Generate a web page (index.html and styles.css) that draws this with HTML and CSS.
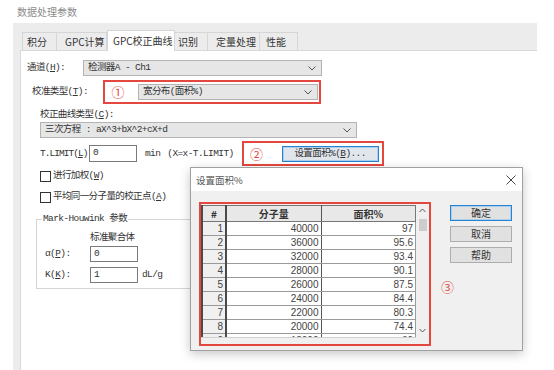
FILE: index.html
```html
<!DOCTYPE html>
<html lang="zh-CN">
<head>
    <meta charset="UTF-8">
    <meta name="viewport" content="width=device-width, initial-scale=1.0">
    <title>数据处理参数</title>
    <link rel="stylesheet" href="styles.css">
</head>
<body>
    <div class="caption">数据处理参数</div>

    <div class="window">
        <div class="tabs">
            <span class="tab tab-1">积分</span>
            <span class="tab tab-2">GPC计算</span>
            <span class="tab active">GPC校正曲线</span>
            <span class="tab tab-4">识别</span>
            <span class="tab tab-5">定量处理</span>
            <span class="tab tab-6">性能</span>
        </div>

        <div class="panel">
            <div class="row row-channel">
                <span class="lbl lbl-channel">通道(<u>H</u>):</span>
                <div class="select select-channel">
                    <span>检测器A - Ch1</span>
                    <svg class="chev" width="8" height="5" viewBox="0 0 8 5"><polyline points="0.5,0.5 4,4 7.5,0.5"/></svg>
                </div>
            </div>

            <div class="row row-type">
                <span class="lbl lbl-type">校准类型(<u>T</u>):</span>
                <div class="mark mark-1">
                    <span class="circ">①</span>
                    <div class="select select-type">
                        <span>宽分布(面积%)</span>
                        <svg class="chev" width="8" height="5" viewBox="0 0 8 5"><polyline points="0.5,0.5 4,4 7.5,0.5"/></svg>
                    </div>
                </div>
            </div>

            <div class="lbl lbl-curve">校正曲线类型(<u>C</u>):</div>
            <div class="select select-curve">
                <span>三次方程 : aX^3+bX^2+cX+d</span>
                <svg class="chev" width="8" height="5" viewBox="0 0 8 5"><polyline points="0.5,0.5 4,4 7.5,0.5"/></svg>
            </div>

            <div class="row row-limit">
                <span class="lbl lbl-limit">T.LIMIT(<u>L</u>)</span>
                <div class="input input-limit">0</div>
                <span class="lbl unit-min">min</span>
                <span class="lbl formula">(X=x-T.LIMIT)</span>
                <div class="mark mark-2">
                    <span class="circ">②</span>
                    <div class="button button-area">设置面积%(<u>B</u>)...</div>
                </div>
            </div>

            <div class="check check-weight"><span class="box"></span>进行加权(<u>W</u>)</div>
            <div class="check check-avg"><span class="box"></span>平均同一分子量的校正点(<u>A</u>)</div>

            <fieldset class="group">
                <legend>Mark-Houwink 参数</legend>
                <div class="lbl std">标准聚合体</div>
                <div class="row row-alpha">
                    <span class="lbl lbl-param">α(<u>P</u>):</span>
                    <div class="input">0</div>
                </div>
                <div class="row row-k">
                    <span class="lbl lbl-param">K(<u>K</u>):</span>
                    <div class="input">1</div>
                    <span class="lbl unit-dl">dL/g</span>
                </div>
            </fieldset>
        </div>
    </div>

    <div class="dialog">
        <div class="dialog-title">
            <span>设置面积%</span>
            <svg class="close" width="10" height="10" viewBox="0 0 10 10"><path d="M0.5 0.5 L9.5 9.5 M9.5 0.5 L0.5 9.5"/></svg>
        </div>
        <div class="dialog-body">
            <div class="mark mark-3">
                <div class="grid">
                    <table>
                        <tr><th class="c-no">#</th><th class="c-mw">分子量</th><th class="c-area">面积%</th></tr>
                        <tr><td class="c-no">1</td><td>40000</td><td>97</td></tr>
                        <tr><td class="c-no">2</td><td>36000</td><td>95.6</td></tr>
                        <tr><td class="c-no">3</td><td>32000</td><td>93.4</td></tr>
                        <tr><td class="c-no">4</td><td>28000</td><td>90.1</td></tr>
                        <tr><td class="c-no">5</td><td>26000</td><td>87.5</td></tr>
                        <tr><td class="c-no">6</td><td>24000</td><td>84.4</td></tr>
                        <tr><td class="c-no">7</td><td>22000</td><td>80.3</td></tr>
                        <tr><td class="c-no">8</td><td>20000</td><td>74.4</td></tr>
                        <tr><td class="c-no">9</td><td>18000</td><td>69</td></tr>
                    </table>
                </div>
                <div class="scrollbar">
                    <svg width="7" height="5" viewBox="0 0 7 5"><polyline points="0.5,4 3.5,1 6.5,4"/></svg>
                    <div class="thumb"></div>
                    <svg class="down" width="7" height="5" viewBox="0 0 7 5"><polyline points="0.5,1 3.5,4 6.5,1"/></svg>
                </div>
            </div>
            <div class="side">
                <div class="button default">确定</div>
                <div class="button">取消</div>
                <div class="button">帮助</div>
                <span class="circ circ-3">③</span>
            </div>
        </div>
    </div>
</body>
</html>
```

FILE: styles.css
```css
* {
    box-sizing: border-box;
}
body {
    margin: 0;
    background: #fff;
    color: #333;
    font-family: "Noto Sans CJK SC", sans-serif;
    font-size: 10px;
    line-height: 14px;
    width: 554px;
    height: 370px;
    overflow: hidden;
    position: relative;
}
u {
    text-decoration: underline;
    text-underline-offset: 1px;
}
.caption {
    color: #8c8c8c;
    padding: 5px 0 0 17px;
    margin-bottom: 4px;
}
.window {
    margin-left: 13px;
    width: 524px;
    height: 347px;
    background: #ececec;
    display: flex;
    flex-direction: column;
}
.tabs {
    height: 27px;
    padding-left: 9px;
    display: flex;
    align-items: flex-end;
}
.tab {
    height: 18px;
    line-height: 17px;
    border: 1px solid #d6d6d6;
    border-bottom: none;
    border-left: none;
    padding-left: 4px;
    color: #333;
}
.tab-1 { width: 35px; border-left: 1px solid #d6d6d6; }
.tab-2 { width: 50px; padding-left: 8px; }
.tab.active {
    width: 68px;
    height: 21px;
    line-height: 19px;
    background: #fff;
    border-left: 1px solid #d6d6d6;
    margin-bottom: -1px;
    position: relative;
    padding-left: 5px;
}
.tab-4 { width: 33px; padding-left: 3px; }
.tab-5 { width: 52px; padding-left: 8px; }
.tab-6 { width: 38px; padding-left: 6px; }

.panel {
    flex: 1;
    margin-left: 7px;
    background: #fff;
    border-top: 1px solid #d9d9d9;
    border-left: 1px solid #dadada;
}
.row {
    display: flex;
    align-items: center;
}
.lbl, .select, .input, .button, .check, legend {
    font-family: "Liberation Mono", "Noto Sans CJK SC", monospace;
    font-size: 9.5px;
    letter-spacing: -0.6px;
    white-space: nowrap;
}
.select {
    height: 16px;
    background: #e6e6e6;
    border: 1px solid #b4b4b4;
    display: flex;
    align-items: center;
    justify-content: space-between;
    padding: 0 5px 0 4px;
}
.chev polyline, .scrollbar polyline {
    fill: none;
    stroke: #555;
    stroke-width: 1;
}
.row-channel {
    margin-top: 9px;
    padding-left: 6px;
}
.lbl-channel { width: 56px; }
.select-channel { width: 239px; }

.row-type {
    margin-top: 4px;
    padding-left: 11px;
}
.lbl-type { width: 71px; }
.mark {
    border: 2px solid #e4473e;
    display: flex;
    align-items: center;
}
.circ {
    color: #e4473e;
    font-family: "Noto Sans CJK SC", sans-serif;
    font-size: 13px;
    line-height: 14px;
    text-align: center;
}
.mark-1 {
    width: 218px;
    height: 24px;
}
.mark-1 .circ { width: 26px; }
.select-type {
    width: 180px;
    margin-left: 7px;
}

.lbl-curve {
    margin: 4px 0 0 19px;
}
.select-curve {
    width: 317px;
    margin-left: 19px;
}

.row-limit {
    margin-top: 3px;
    padding-left: 19px;
    height: 25px;
}
.lbl-limit {
    width: 49px;
    letter-spacing: -0.95px;
}
.input {
    width: 48px;
    height: 17px;
    border: 1px solid #7a7a7a;
    background: #fff;
    padding: 0 3px;
    line-height: 13px;
}
.unit-min { margin-left: 8px; }
.formula { margin-left: 7px; }
.mark-2 {
    margin-left: 8px;
    width: 142px;
    height: 25px;
}
.mark-2 .circ { width: 26px; }
.button {
    height: 16px;
    background: #e1e1e1;
    border: 1px solid #adadad;
    text-align: center;
    line-height: 14px;
}
.button-area {
    width: 97px;
    margin-left: 12px;
    border-color: #2b82cc;
    box-shadow: inset 0 0 0 1px #a8d0f0;
    background: #e0e6ec;
}

.check {
    display: flex;
    align-items: center;
    margin-left: 19px;
    height: 14px;
}
.check .box {
    width: 11px;
    height: 11px;
    border: 1px solid #333;
    margin-right: 2px;
    background: #fff;
}
.check-weight { margin-top: 3px; }
.check-avg { margin-top: 7px; }

.group {
    margin: 9px 0 0 15px;
    width: 300px;
    padding: 0 0 5px 0;
    border: 1px solid #d5d5d5;
}
.group legend {
    margin-left: 5px;
    padding: 0 1px;
    line-height: 12px;
}
.std {
    margin: 6px 0 0 53px;
}
.row-alpha {
    margin-top: 1px;
    padding-left: 8px;
}
.row-k {
    margin-top: 5px;
    padding-left: 8px;
}
.row-alpha .input, .row-k .input { height: 16px; }
.lbl-param { width: 45px; }
.unit-dl { margin-left: 4px; }

.dialog {
    position: absolute;
    left: 190px;
    top: 167px;
    width: 333px;
    height: 184px;
    border: 1px solid #a0a0a0;
    background: #f0f0f0;
    box-shadow: 0 3px 10px rgba(0, 0, 0, 0.22);
    display: flex;
    flex-direction: column;
}
.dialog-title {
    height: 23px;
    background: #fff;
    display: flex;
    align-items: center;
    justify-content: space-between;
    padding: 0 6px 0 5px;
    color: #555;
    font-size: 9.5px;
}
.close path {
    stroke: #444;
    stroke-width: 1;
}
.dialog-body {
    flex: 1;
    display: flex;
    align-items: flex-start;
}
.mark-3 {
    margin: 11px 0 0 8px;
    width: 232px;
    height: 144px;
    align-items: flex-start;
    padding-top: 1px;
}
.grid {
    width: 215px;
    height: 133px;
    overflow: hidden;
    border-bottom: 1px solid #d0d0d0;
}
table {
    width: 215px;
    border-collapse: collapse;
    table-layout: fixed;
    font-family: "Liberation Sans", "Noto Sans CJK SC", sans-serif;
    font-size: 10px;
    color: #444;
}
th, td {
    border: 1px solid #9a9a9a;
    padding: 0 2px;
    height: 14px;
    line-height: 12px;
    text-align: right;
}
th {
    height: 16px;
    background: #e8e8e8;
    text-align: center;
    font-family: "Noto Sans CJK SC", sans-serif;
    font-weight: bold;
    font-size: 10px;
    color: #333;
    border-color: #777;
}
td {
    background: #fff;
}
td.c-no {
    background: #f0f0f0;
    border-left: 2px solid #4a4a4a;
    border-right: 2px solid #4a4a4a;
}
th.c-no { width: 24px; border-left: 2px solid #4a4a4a; border-right: 2px solid #4a4a4a; }
th.c-mw { width: 95px; border-right: 1px solid #555; }
td:nth-child(2) { border-right: 1px solid #555; }
.scrollbar {
    width: 13px;
    height: 133px;
    display: flex;
    flex-direction: column;
    align-items: center;
    padding-top: 3px;
}
.thumb {
    width: 8px;
    height: 12px;
    background: #cdcdcd;
    margin-top: 6px;
}
.scrollbar .down {
    margin-top: auto;
    margin-bottom: 5px;
}
.side {
    margin: 14px 0 0 7px;
    display: flex;
    flex-direction: column;
    align-items: flex-start;
}
.side .button {
    width: 62px;
    margin-left: 12px;
    margin-bottom: 5px;
    font-family: "Noto Sans CJK SC", sans-serif;
    font-size: 10px;
    letter-spacing: 0;
}
.side .default {
    border-color: #2b82cc;
    box-shadow: inset 0 0 0 1px #a8d0f0;
}
.circ-3 {
    margin: 12px 0 0 3px;
}
```
